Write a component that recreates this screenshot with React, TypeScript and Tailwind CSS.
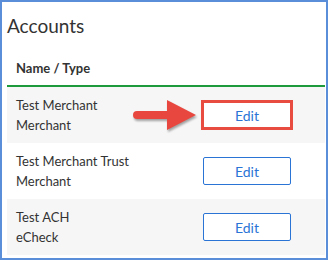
const rows = [
  { name: "Test Merchant", type: "Merchant", highlight: true },
  { name: "Test Merchant Trust", type: "Merchant", highlight: false },
  { name: "Test ACH", type: "eCheck", highlight: false },
];

function Arrow() {
  return (
    <svg width="66" height="34" viewBox="0 0 66 34" className="drop-shadow-[1px_2px_1px_rgba(0,0,0,0.35)]">
      <path d="M4 13 H34 V2 L63 17 L34 32 V21 H4 A4 4 0 0 1 4 13 Z" fill="#e8473f" />
    </svg>
  );
}

export default function App() {
  return (
    <div className="w-[328px] h-[260px] border-2 border-[#5b8ed8] bg-white font-['Lato',sans-serif] text-[#333]">
      <div className="pl-[5px] pr-[1px]">
        <h1 className="text-[19px] leading-none pt-[14px] h-[50px]">Accounts</h1>
        <div className="h-[35px] flex items-center pl-[9px] text-[13px] font-bold border-b-2 border-[#1c9a3c]">
          Name / Type
        </div>
        {rows.map((r, i) => (
          <div
            key={i}
            className={`h-[56px] flex items-center pl-[9px] ${i % 2 === 0 ? "bg-[#f6f6f6]" : "bg-white"}`}
          >
            <div className="w-[115px] text-[13px] leading-[20px] whitespace-nowrap">
              <div>{r.name}</div>
              <div>{r.type}</div>
            </div>
            <div className="w-[70px] flex justify-center">{r.highlight && <Arrow />}</div>
            {r.highlight ? (
              <div className="border-[3px] border-[#e84b40]">
                <button className="w-[86px] h-[24px] bg-white text-[#2a74d6] text-[14px]">Edit</button>
              </div>
            ) : (
              <button className="w-[88px] h-[28px] bg-white border border-[#2a74d6] rounded-[2px] text-[#2a74d6] text-[14px] ml-[2px]">
                Edit
              </button>
            )}
          </div>
        ))}
      </div>
    </div>
  );
}
